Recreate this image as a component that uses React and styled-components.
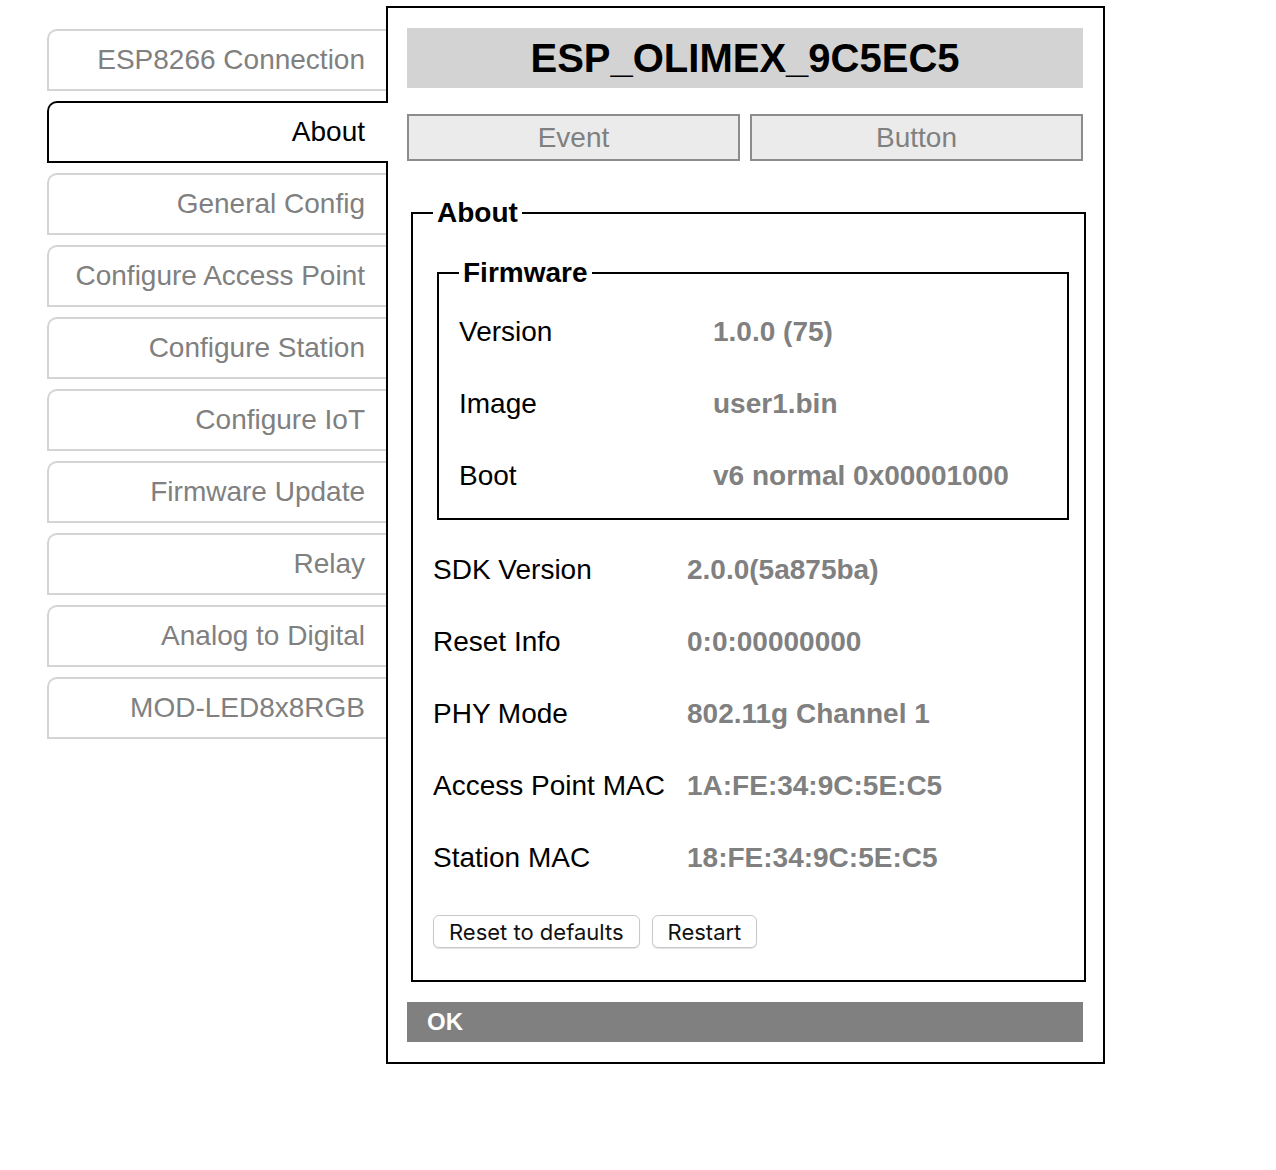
import React from "react";
import styled, { createGlobalStyle } from "styled-components";

const GlobalStyle = createGlobalStyle`
  html, body { margin: 0; padding: 0; background: #fff; }
  body { font-family: "Liberation Sans", Arial, Helvetica, sans-serif; }
  * { box-sizing: border-box; }
`;

const Page = styled.div`
  display: flex;
  align-items: flex-start;
  padding: 6px 0 0 47px;
`;

const Nav = styled.nav`
  width: 339px;
  flex: none;
  display: flex;
  flex-direction: column;
  gap: 10px;
  padding-top: 23px;
`;

const Tab = styled.div`
  position: relative;
  z-index: ${(p) => (p.$active ? 2 : 1)};
  height: 62px;
  margin-right: ${(p) => (p.$active ? "-2px" : "0")};
  display: flex;
  align-items: center;
  justify-content: flex-end;
  padding-right: ${(p) => (p.$active ? "23px" : "21px")};
  background: #fff;
  border: 2px solid ${(p) => (p.$active ? "#000" : "#d4d4d4")};
  border-right: none;
  border-top-left-radius: 10px;
  font-size: 28px;
  color: ${(p) => (p.$active ? "#000" : "#808080")};
  white-space: nowrap;
`;

const Panel = styled.main`
  width: 719px;
  flex: none;
  border: 2px solid #000;
  padding: 20px 20px 20px 19px;
`;

const Title = styled.h1`
  margin: 0 0 26px;
  height: 60px;
  background: #d3d3d3;
  display: flex;
  align-items: center;
  justify-content: center;
  font-size: 40px;
  font-weight: bold;
  color: #000;
`;

const ButtonRow = styled.div`
  display: grid;
  grid-template-columns: 1fr 1fr;
  gap: 10px;
`;

const GrayButton = styled.button`
  height: 47px;
  background: #ebebeb;
  border: 2px solid #8c8c8c;
  font-family: "Liberation Sans", Arial, sans-serif;
  font-size: 28px;
  color: #808080;
  padding: 0;
`;

const Fieldset = styled.fieldset`
  margin: ${(p) => p.$margin};
  border: 2px solid #000;
  padding: ${(p) => p.$padding};
  min-width: 0;
`;

const Legend = styled.legend`
  font-size: 28px;
  line-height: 32px;
  font-weight: bold;
  padding: 0 4px;
  color: #000;
`;

const Row = styled.div`
  height: 72px;
  display: flex;
  align-items: center;
  font-size: 28px;
`;

const Label = styled.div`
  width: 254px;
  flex: none;
  color: #000;
`;

const Value = styled.div`
  font-weight: bold;
  color: #808080;
`;

const Actions = styled.div`
  display: flex;
  gap: 12px;
  margin-top: 21px;
`;

const SysButton = styled.button`
  height: 33px;
  padding: 0 15px;
  background: #fff;
  border: 1px solid #c9c9c9;
  border-radius: 6px;
  box-shadow: 0 1px 1px rgba(0, 0, 0, 0.12);
  font-family: Inter, "Noto Sans", sans-serif;
  font-size: 22px;
  color: #111;
`;

const StatusBar = styled.div`
  margin-top: 20px;
  height: 40px;
  background: #808080;
  color: #fff;
  display: flex;
  align-items: center;
  padding-left: 20px;
  font-size: 24px;
  font-weight: bold;
`;

const tabs = [
  "ESP8266 Connection",
  "About",
  "General Config",
  "Configure Access Point",
  "Configure Station",
  "Configure IoT",
  "Firmware Update",
  "Relay",
  "Analog to Digital",
  "MOD-LED8x8RGB",
];

const firmware = [
  ["Version", "1.0.0 (75)"],
  ["Image", "user1.bin"],
  ["Boot", "v6 normal 0x00001000"],
];

const info = [
  ["SDK Version", "2.0.0(5a875ba)"],
  ["Reset Info", "0:0:00000000"],
  ["PHY Mode", "802.11g Channel 1"],
  ["Access Point MAC", "1A:FE:34:9C:5E:C5"],
  ["Station MAC", "18:FE:34:9C:5E:C5"],
];

export default function App() {
  return (
    <>
      <GlobalStyle />
      <Page>
        <Nav>
          {tabs.map((t) => (
            <Tab key={t} $active={t === "About"}>
              {t}
            </Tab>
          ))}
        </Nav>
        <Panel>
          <Title>ESP_OLIMEX_9C5EC5</Title>
          <ButtonRow>
            <GrayButton>Event</GrayButton>
            <GrayButton>Button</GrayButton>
          </ButtonRow>
          <Fieldset $margin="36px -3px 0 4px" $padding="28px 20px 32px 20px">
            <Legend>About</Legend>
            <Fieldset $margin="0 -5px 14px 4px" $padding="7px 20px 6px 20px">
              <Legend>Firmware</Legend>
              {firmware.map(([l, v]) => (
                <Row key={l}>
                  <Label>{l}</Label>
                  <Value>{v}</Value>
                </Row>
              ))}
            </Fieldset>
            {info.map(([l, v]) => (
              <Row key={l}>
                <Label>{l}</Label>
                <Value>{v}</Value>
              </Row>
            ))}
            <Actions>
              <SysButton>Reset to defaults</SysButton>
              <SysButton>Restart</SysButton>
            </Actions>
          </Fieldset>
          <StatusBar>OK</StatusBar>
        </Panel>
      </Page>
    </>
  );
}
